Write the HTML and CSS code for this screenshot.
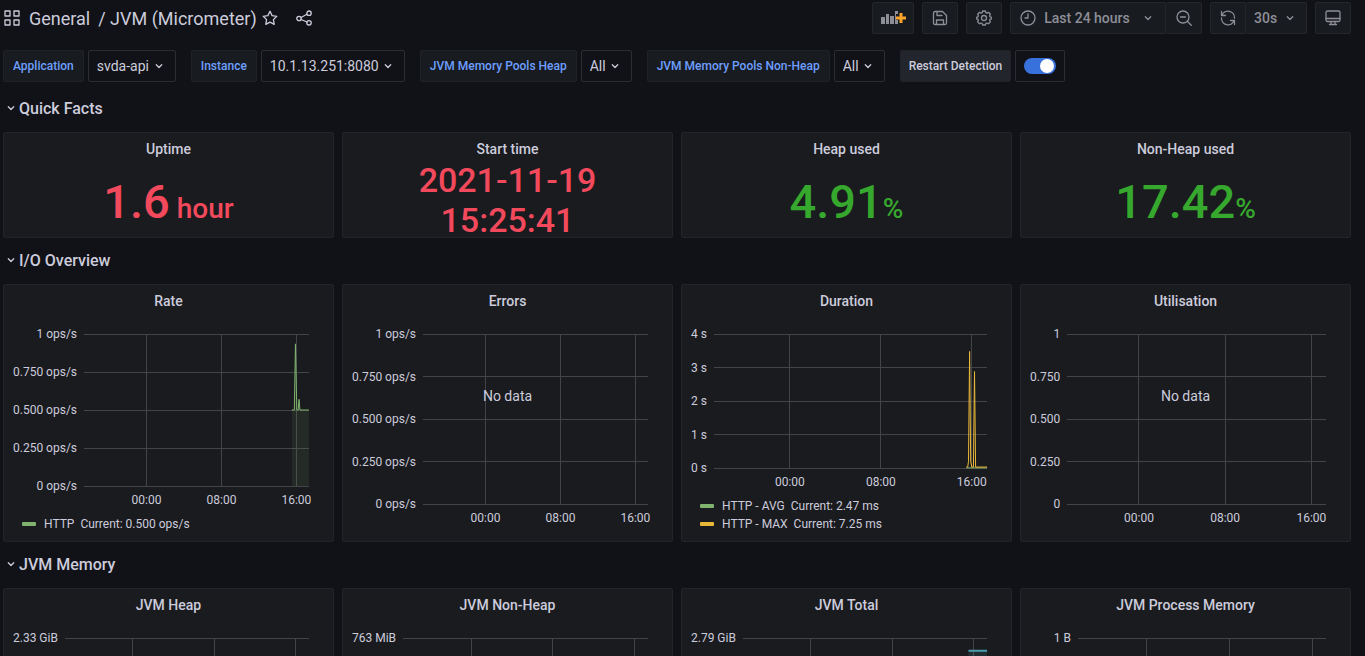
FILE: index.html
```html
<!DOCTYPE html>
<html lang="en">
<head>
  <meta charset="UTF-8">
  <meta name="viewport" content="width=device-width, initial-scale=1.0">
  <title>JVM (Micrometer)</title>
  <link rel="stylesheet" href="styles.css">
</head>
<body>

<svg class="sprite" aria-hidden="true">
  <symbol id="chevron" viewBox="0 0 16 16"><path d="M5.300 6.800 8 9.500l2.700-2.700"/></symbol>
</svg>

<header class="toolbar">
  <svg class="icon" viewBox="0 0 16 16"><path d="M1 1h5v5H1zM10 1h5v5h-5zM1 10h5v5H1zM10 10h5v5h-5z"/></svg>
  <h1 class="breadcrumb"><a href="#">General</a><a href="#">/ JVM (Micrometer)</a></h1>
  <button class="icon-button" aria-label="Mark as favorite">
    <svg class="icon" viewBox="0 0 16 16"><path d="M8 1.3l2.1 4.3 4.7.7-3.4 3.3.8 4.7L8 12.1l-4.2 2.2.8-4.7L1.200 6.300l4.700-.7z"/></svg>
  </button>
  <button class="icon-button share" aria-label="Share dashboard">
    <svg class="icon" viewBox="0 0 16 16"><circle cx="3" cy="8.500" r="2.200"/><circle cx="13" cy="3.200" r="2.200"/><circle cx="13" cy="12.800" r="2.200"/><path d="M5 7.500l6-3.200M5 9.500l6 2.500"/></svg>
  </button>

  <div class="actions">
    <button class="tool add-panel" aria-label="Add panel">
      <svg viewBox="0 0 25 16"><path class="bars" d="M0 7h4v7H0zM5 4h3v10H5zM9 6h4v8H9zM14 1h3v3h-2v6h2v4h-3z"/><path class="plus" d="M18.500 3h3v3.500H25v3h-3.500V13h-3V9.500H15v-3h3.500z"/></svg>
    </button>
    <button class="tool" aria-label="Save dashboard">
      <svg class="icon" viewBox="0 0 16 16"><path d="M3 1.500h7.500l4 4V13a1.500 1.500 0 0 1-1.500 1.500H3A1.500 1.500 0 0 1 1.500 13V3A1.500 1.500 0 0 1 3 1.500zM5 1.500V5.500h5M4.500 14.500V10h7v4.500"/></svg>
    </button>
    <button class="tool" aria-label="Dashboard settings">
      <svg class="icon" viewBox="0 0 16 16"><circle cx="8" cy="8" r="2.500"/><path d="M6.600 1h2.800l.5 1.700 1 .4 1.600-.8 1.900 2-.8 1.500.4 1 1.600.5v1.500l-1.600.5-.4 1 .8 1.600-2 1.900-1.500-.8-1 .4L9.400 15H6.600l-.5-1.600-1-.4-1.500.8-2-1.900.8-1.600-.4-1L.5 8.800V7.300L2 6.800l.4-1-.8-1.500 2-2 1.500.8 1-.4z"/></svg>
    </button>
    <div class="tool-group">
      <button class="tool time-range">
        <svg class="icon" viewBox="0 0 16 16"><circle cx="8" cy="8" r="7"/><path d="M8 4v4H5"/></svg>
        <span>Last 24 hours</span>
        <svg class="icon"><use href="#chevron"/></svg>
      </button>
      <button class="tool" aria-label="Zoom out time range">
        <svg class="icon" viewBox="0 0 16 16"><circle cx="7" cy="7" r="6"/><path d="M4.500 7h5M11.500 11.500L15.300 15.300"/></svg>
      </button>
    </div>
    <div class="tool-group">
      <button class="tool" aria-label="Refresh dashboard">
        <svg class="icon" viewBox="0 0 16 16"><path d="M1.500 1.500v4h4M2 5.200A6.500 6.500 0 0 1 14.500 8M14.500 14.500v-4h-4M14 10.800A6.500 6.500 0 0 1 1.500 8"/></svg>
      </button>
      <div class="tool interval">
        <select aria-label="Refresh interval"><option>30s</option></select>
        <svg class="icon"><use href="#chevron"/></svg>
      </div>
    </div>
    <button class="tool" aria-label="Cycle view mode">
      <svg class="icon" viewBox="0 0 16 16"><rect x="1" y="1" width="14" height="10.500" rx="1.500"/><path d="M1 8.500h14M6 11.500v2.500M10 11.500v2.500M4.500 14.500h7"/></svg>
    </button>
  </div>
</header>

<main class="dashboard">
  <div class="variables">
    <div class="variable">
      <label for="application">Application</label>
      <div class="value"><select id="application"><option>svda-api</option></select><svg class="icon"><use href="#chevron"/></svg></div>
    </div>
    <div class="variable">
      <label for="instance">Instance</label>
      <div class="value"><select id="instance"><option>10.1.13.251:8080</option></select><svg class="icon"><use href="#chevron"/></svg></div>
    </div>
    <div class="variable">
      <label for="heap">JVM Memory Pools Heap</label>
      <div class="value"><select id="heap"><option>All</option></select><svg class="icon"><use href="#chevron"/></svg></div>
    </div>
    <div class="variable">
      <label for="nonheap">JVM Memory Pools Non-Heap</label>
      <div class="value"><select id="nonheap"><option>All</option></select><svg class="icon"><use href="#chevron"/></svg></div>
    </div>
    <div class="variable annotation">
      <label for="restart">Restart Detection</label>
      <div class="value"><input type="checkbox" class="switch" id="restart" checked></div>
    </div>
  </div>

  <h2 class="row-title"><svg class="icon"><use href="#chevron"/></svg>Quick Facts</h2>
  <div class="row">
    <section class="panel">
      <h3>Uptime</h3>
      <div class="stat red"><p>1.6<small> hour</small></p></div>
    </section>
    <section class="panel">
      <h3>Start time</h3>
      <div class="stat date red"><p>2021-11-19<br>15:25:41</p></div>
    </section>
    <section class="panel">
      <h3>Heap used</h3>
      <div class="stat green"><p>4.91<small>%</small></p></div>
    </section>
    <section class="panel">
      <h3>Non-Heap used</h3>
      <div class="stat green"><p>17.42<small>%</small></p></div>
    </section>
  </div>

  <h2 class="row-title"><svg class="icon"><use href="#chevron"/></svg>I/O Overview</h2>
  <div class="row">
    <section class="panel graph">
      <h3>Rate</h3>
      <div class="chart">
        <div class="y-axis"><span>1 ops/s</span><span>0.750 ops/s</span><span>0.500 ops/s</span><span>0.250 ops/s</span><span>0 ops/s</span></div>
        <svg class="plot">
          <g class="grid">
            <line x2="100%"/><line x2="100%" y1="25%" y2="25%"/><line x2="100%" y1="50%" y2="50%"/><line x2="100%" y1="75%" y2="75%"/><line x2="100%" y1="100%" y2="100%"/>
            <line x1="27.8%" x2="27.8%" y2="100%"/><line x1="61.1%" x2="61.1%" y2="100%"/><line x1="94.4%" x2="94.4%" y2="100%"/>
          </g>
          <svg viewBox="0 0 100 100" preserveAspectRatio="none" class="series green-series">
            <path class="area" d="M92.400 100V50H93.500L94 6.500 94.600 50H95.200L95.600 43 96 50H100V100z"/>
            <path class="line" d="M92.400 50H93.500L94 6.500 94.600 50H95.200L95.600 43 96 50H100"/>
          </svg>
          <text x="27.8%" y="100%" dy="18">00:00</text><text x="61.1%" y="100%" dy="18">08:00</text><text x="94.4%" y="100%" dy="18">16:00</text>
        </svg>
      </div>
      <ul class="legend">
        <li><i class="swatch"></i><a href="#">HTTP</a><span>Current: 0.500 ops/s</span></li>
      </ul>
    </section>

    <section class="panel graph">
      <h3>Errors</h3>
      <div class="chart">
        <div class="y-axis"><span>1 ops/s</span><span>0.750 ops/s</span><span>0.500 ops/s</span><span>0.250 ops/s</span><span>0 ops/s</span></div>
        <svg class="plot">
          <g class="grid">
            <line x2="100%"/><line x2="100%" y1="25%" y2="25%"/><line x2="100%" y1="50%" y2="50%"/><line x2="100%" y1="75%" y2="75%"/><line x2="100%" y1="100%" y2="100%"/>
            <line x1="27.8%" x2="27.8%" y2="100%"/><line x1="61.1%" x2="61.1%" y2="100%"/><line x1="94.4%" x2="94.4%" y2="100%"/>
          </g>
          <text x="27.8%" y="100%" dy="18">00:00</text><text x="61.1%" y="100%" dy="18">08:00</text><text x="94.4%" y="100%" dy="18">16:00</text>
        </svg>
      </div>
      <div class="no-data">No data</div>
    </section>

    <section class="panel graph">
      <h3>Duration</h3>
      <div class="chart">
        <div class="y-axis"><span>4 s</span><span>3 s</span><span>2 s</span><span>1 s</span><span>0 s</span></div>
        <svg class="plot">
          <g class="grid">
            <line x2="100%"/><line x2="100%" y1="25%" y2="25%"/><line x2="100%" y1="50%" y2="50%"/><line x2="100%" y1="75%" y2="75%"/><line x2="100%" y1="100%" y2="100%"/>
            <line x1="27.8%" x2="27.8%" y2="100%"/><line x1="61.1%" x2="61.1%" y2="100%"/><line x1="94.4%" x2="94.4%" y2="100%"/>
          </g>
          <svg viewBox="0 0 100 100" preserveAspectRatio="none" class="series">
            <path class="line green-line" d="M92.400 99.900H100"/>
            <path class="line yellow-line" d="M92.400 99.300H92.900L93.200 95 93.600 13 94 95 94.400 99.300H95L95.400 28 95.800 99.300H100"/>
          </svg>
          <text x="27.8%" y="100%" dy="18">00:00</text><text x="61.1%" y="100%" dy="18">08:00</text><text x="94.4%" y="100%" dy="18">16:00</text>
        </svg>
      </div>
      <ul class="legend">
        <li><i class="swatch"></i><a href="#">HTTP - AVG</a><span>Current: 2.47 ms</span></li>
        <li><i class="swatch yellow"></i><a href="#">HTTP - MAX</a><span>Current: 7.25 ms</span></li>
      </ul>
    </section>

    <section class="panel graph">
      <h3>Utilisation</h3>
      <div class="chart">
        <div class="y-axis"><span>1</span><span>0.750</span><span>0.500</span><span>0.250</span><span>0</span></div>
        <svg class="plot">
          <g class="grid">
            <line x2="100%"/><line x2="100%" y1="25%" y2="25%"/><line x2="100%" y1="50%" y2="50%"/><line x2="100%" y1="75%" y2="75%"/><line x2="100%" y1="100%" y2="100%"/>
            <line x1="27.8%" x2="27.8%" y2="100%"/><line x1="61.1%" x2="61.1%" y2="100%"/><line x1="94.4%" x2="94.4%" y2="100%"/>
          </g>
          <text x="27.8%" y="100%" dy="18">00:00</text><text x="61.1%" y="100%" dy="18">08:00</text><text x="94.4%" y="100%" dy="18">16:00</text>
        </svg>
      </div>
      <div class="no-data">No data</div>
    </section>
  </div>

  <h2 class="row-title"><svg class="icon"><use href="#chevron"/></svg>JVM Memory</h2>
  <div class="row">
    <section class="panel graph">
      <h3>JVM Heap</h3>
      <div class="chart">
        <div class="y-axis memory"><span>2.33 GiB</span></div>
        <svg class="plot">
          <g class="grid"><line x2="100%"/><line x1="27.8%" x2="27.8%" y2="100%"/><line x1="61.1%" x2="61.1%" y2="100%"/><line x1="94.4%" x2="94.4%" y2="100%"/></g>
        </svg>
      </div>
    </section>
    <section class="panel graph">
      <h3>JVM Non-Heap</h3>
      <div class="chart">
        <div class="y-axis memory"><span>763 MiB</span></div>
        <svg class="plot">
          <g class="grid"><line x2="100%"/><line x1="27.8%" x2="27.8%" y2="100%"/><line x1="61.1%" x2="61.1%" y2="100%"/><line x1="94.4%" x2="94.4%" y2="100%"/></g>
        </svg>
      </div>
    </section>
    <section class="panel graph">
      <h3>JVM Total</h3>
      <div class="chart">
        <div class="y-axis memory"><span>2.79 GiB</span></div>
        <svg class="plot">
          <g class="grid"><line x2="100%"/><line x1="27.8%" x2="27.8%" y2="100%"/><line x1="61.1%" x2="61.1%" y2="100%"/><line x1="94.4%" x2="94.4%" y2="100%"/></g>
          <svg viewBox="0 0 100 100" preserveAspectRatio="none" class="series cyan-series">
            <path class="area" d="M92.400 100V7.500H100V100z"/>
            <path class="line" d="M92.400 7.500H100"/>
          </svg>
        </svg>
      </div>
    </section>
    <section class="panel graph">
      <h3>JVM Process Memory</h3>
      <div class="chart">
        <div class="y-axis memory"><span>1 B</span></div>
        <svg class="plot">
          <g class="grid"><line x2="100%"/><line x1="27.8%" x2="27.8%" y2="100%"/><line x1="61.1%" x2="61.1%" y2="100%"/><line x1="94.4%" x2="94.4%" y2="100%"/></g>
        </svg>
      </div>
    </section>
  </div>
</main>

</body>
</html>
```
FILE: styles.css
```css
* {
  box-sizing: border-box;
}

body {
  display: flex;
  flex-direction: column;
  height: 100vh;
  margin: 0;
  overflow: hidden;
  background: #111217;
  color: #ccccdc;
  font-family: Roboto, "Liberation Sans", sans-serif;
  font-size: 14px;
}

h1, h2, h3, p, ul {
  margin: 0;
  padding: 0;
}

a {
  color: inherit;
  text-decoration: none;
}

button, select {
  font: inherit;
  color: inherit;
  background: none;
  border: 0;
  padding: 0;
  cursor: pointer;
}

select {
  appearance: none;
}

.sprite {
  display: none;
}

.icon {
  width: 16px;
  height: 16px;
  flex: none;
  fill: none;
  stroke: currentColor;
  stroke-width: 1.3;
  stroke-linecap: round;
  stroke-linejoin: round;
}

/* top bar */
.toolbar {
  display: flex;
  align-items: center;
  flex: none;
  height: 36px;
  padding: 0 14px 0 4px;
}

.breadcrumb {
  display: flex;
  gap: 8px;
  margin: 0 5px 0 9px;
  font-size: 18px;
  font-weight: 400;
}

.icon-button {
  display: flex;
}

.share {
  margin-left: 18px;
}

.actions {
  display: flex;
  gap: 8px;
  margin-left: auto;
  color: #8e8e99;
}

.tool {
  display: flex;
  align-items: center;
  justify-content: center;
  width: 36px;
  height: 32px;
  background: #181b1f;
  border: 1px solid #25262b;
  border-radius: 2px;
  font-weight: 500;
}

.tool-group {
  display: flex;
}

.tool-group .tool + .tool {
  border-left: 0;
}

.add-panel {
  width: 42px;
}

.add-panel svg {
  width: 25px;
  height: 16px;
}

.bars {
  fill: #8e8e99;
}

.plus {
  fill: #f9a32b;
}

.time-range {
  width: 156px;
  gap: 8px;
}

.time-range .icon:last-child {
  margin-left: 2px;
}

.interval {
  width: 61px;
  gap: 4px;
}

/* template variables */
.dashboard {
  flex: 1;
  min-height: 0;
  padding: 14px 14px 0 3px;
  overflow-y: auto;
  scrollbar-width: none;
}

.variables {
  display: flex;
  gap: 15px;
  margin-bottom: 4px;
}

.variable {
  display: flex;
  gap: 4px;
}

.variable label {
  padding: 0 9px;
  height: 32px;
  line-height: 30px;
  border: 1px solid #202226;
  border-radius: 2px;
  background: #181b1f;
  color: #6e9fff;
  font-size: 12px;
  font-weight: 500;
}

.value {
  display: flex;
  align-items: center;
  gap: 1px;
  height: 32px;
  padding: 0 8px;
  border: 1px solid #2c2d33;
  border-radius: 2px;
}

.variable.annotation label {
  padding: 0 8px;
  background: #22252b;
  color: #ccccdc;
}

.switch {
  appearance: none;
  display: flex;
  width: 32px;
  height: 16px;
  margin: 0;
  padding: 1px 2px;
  border-radius: 8px;
  background: #3871dc;
}

.switch::before {
  content: "";
  width: 14px;
  height: 14px;
  margin-left: auto;
  border-radius: 50%;
  background: #fff;
}

/* rows and panels */
.row-title {
  display: flex;
  align-items: center;
  height: 46px;
  padding-bottom: 2px;
  font-size: 16px;
  font-weight: 500;
}

.row {
  display: grid;
  grid-template-columns: repeat(4, 1fr);
  gap: 8px;
}

.panel {
  display: flex;
  flex-direction: column;
  position: relative;
  min-width: 0;
  height: 106px;
  border: 1px solid #222428;
  border-radius: 2px;
  background: #1a1b1f;
}

.panel h3 {
  flex: none;
  line-height: 32px;
  text-align: center;
  font-size: 14px;
  font-weight: 500;
}

.stat {
  display: flex;
  flex: 1;
  min-height: 0;
  align-items: center;
  justify-content: center;
  text-align: center;
  font-size: 47px;
  font-weight: 500;
}

.stat small {
  font-size: 28px;
}

.stat.date {
  padding-bottom: 2px;
  font-size: 34px;
  line-height: 40px;
}

.red {
  color: #f2495c;
}

.green {
  color: #37a82e;
}

/* graphs */
.graph {
  height: 258px;
  padding-bottom: 8px;
}

.chart {
  display: flex;
  flex: 1;
  min-height: 0;
  gap: 7px;
  padding: 17px 24px 29px 9px;
  font-size: 12px;
}

.y-axis {
  display: flex;
  flex-direction: column;
  justify-content: space-between;
  margin: -8px 0;
  line-height: 16px;
  text-align: right;
}

.y-axis.memory {
  min-width: 41px;
}

.plot {
  flex: 1;
  min-width: 0;
  height: 100%;
  overflow: visible;
}

.plot text {
  fill: #ccccdc;
  text-anchor: middle;
}

.grid line {
  stroke: #434448;
  shape-rendering: crispEdges;
}

.series {
  overflow: visible;
}

.line {
  fill: none;
  stroke-width: 1px;
  vector-effect: non-scaling-stroke;
}

.green-series .line, .green-line {
  stroke: #7eb26d;
}

.yellow-line {
  stroke: #eab839;
}

.cyan-series .line {
  stroke: #4a9fae;
  stroke-width: 2px;
}

.green-series .area {
  fill: rgba(126, 178, 109, 0.1);
}

.cyan-series .area {
  fill: rgba(110, 208, 224, 0.1);
}

.legend {
  padding-left: 18px;
  font-size: 12px;
  line-height: 18px;
  list-style: none;
}

.legend li {
  display: flex;
  align-items: center;
  gap: 6px;
}

.swatch {
  width: 14px;
  height: 4px;
  margin-right: 2px;
  border-radius: 1px;
  background: #7eb26d;
}

.swatch.yellow {
  background: #eab839;
}

.no-data {
  position: absolute;
  top: 103px;
  left: 0;
  right: 0;
  text-align: center;
}
```
